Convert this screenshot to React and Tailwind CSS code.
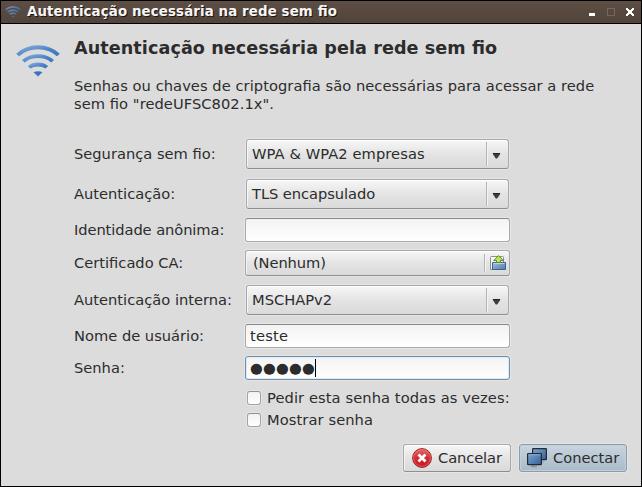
import React from "react";

function WifiIcon({ className }) {
  return (
    <svg viewBox="0 0 44 32" className={className} fill="none">
      <defs>
        <linearGradient id="wifi" x1="0" y1="0" x2="1" y2="1">
          <stop offset="0" stopColor="#8db2e0" />
          <stop offset="0.6" stopColor="#4a80c6" />
          <stop offset="1" stopColor="#3b74bd" />
        </linearGradient>
      </defs>
      <path d="M0.2 8.800Q9 .3 22 .3T43.800 8.800L41 11.200Q33 4.200 22 4.200T3 11.200Z" fill="url(#wifi)" />
      <path d="M6 15Q12.500 9.200 22 9.200T38 15L35.300 17.400Q30 13 22 13T8.700 17.400Z" fill="url(#wifi)" />
      <path d="M11.800 21Q16 17.600 22 17.600T32.200 21L29.500 23.500Q26.500 21.400 22 21.400T14.500 23.500Z" fill="url(#wifi)" />
      <path d="M17.500 27.300Q22 25 26.500 27.300L22 31.600Z" fill="#3b74bd" />
    </svg>
  );
}

function TitleBar() {
  return (
    <div className="flex h-[23px] shrink-0 items-center border-b border-black bg-linear-to-b from-[#5d4e45] to-[#53443b] pl-[4px] pr-[7px]">
      <WifiIcon className="h-[12px] w-[16px] opacity-80" />
      <span className="ml-[6px] grow whitespace-nowrap text-[13.33px] leading-[20px] font-bold tracking-[0.135px] text-[#f8f6f4] [text-shadow:1px_1px_0_#1c1512]">
        Autenticação necessária na rede sem fio
      </span>
      <svg viewBox="0 0 46 10" className="h-[10px] w-[46px]" shapeRendering="crispEdges">
        <rect x="1" y="6" width="6" height="3" fill="#fff" />
        <rect x="19.500" y="1.500" width="7" height="7" fill="none" stroke="#78665a" />
        <path d="M38 1h2v1h1v1h2v-1h1v-1h2v2h-1v1h-1v2h1v1h1v2h-2v-1h-1v-1h-2v1h-1v1h-2v-2h1v-1h1v-2h-1v-1h-1z" fill="#fff" />
      </svg>
    </div>
  );
}

function Row({ label, className, tracking = "", children }) {
  return (
    <div className={"flex items-center " + className}>
      <span className={"w-[171px] shrink-0 whitespace-nowrap " + tracking}>{label}</span>
      {children}
    </div>
  );
}

const raised =
  "flex items-center rounded-[3px] border border-[#a9a9a9] border-b-[#8e8e8e] bg-linear-to-b from-[#f7f7f7] via-[#e4e4e4] to-[#dadada] shadow-[0_0_0_1px_#e5e5e5,inset_0_1px_0_#fff,inset_1px_0_0_#f4f4f4]";

function Combo({ tracking = "", children }) {
  return (
    <div className={raised + " ml-px h-[30px] w-[263px] pl-[5px]"}>
      <span className={"grow whitespace-nowrap " + tracking}>{children}</span>
      <span className="h-6 w-[22px] border-l border-[#b4b4b4] pt-[11px] pl-[5px] shadow-[inset_1px_0_0_#f3f3f3]">
        <svg viewBox="0 0 9 6" className="h-[6px] w-[9px]">
          <path d="M0.500 .5h8L5.200 5.500H3.800Z" fill="#3c3c3c" />
          <path d="M1 .5h7" stroke="#222" />
        </svg>
      </span>
    </div>
  );
}

function FolderIcon() {
  return (
    <svg viewBox="0 0 16 16" className="h-4 w-4">
      <defs>
        <linearGradient id="folder" x1="0" y1="0" x2="1" y2="1">
          <stop offset="0" stopColor="#a5c1df" />
          <stop offset="1" stopColor="#5079ab" />
        </linearGradient>
      </defs>
      <path d="M.5 14.500V2.500Q.5 1.500 1.500 1.500H12.500Q13.500 1.500 13.500 2.500V14.500Z" fill="#f5f5f5" stroke="#8a8f89" />
      <path d="M2.500 7.500H15.500V14.500H2.500Z" fill="url(#folder)" stroke="#40648f" />
      <path d="M3.500 8.500h11" stroke="#bdd3e9" />
      <path d="M8.500 .6L13.300 5.500H10.500V7.500H6.500V5.500H3.700Z" fill="#c3e35c" stroke="#55902a" />
    </svg>
  );
}

function Entry({ focused, children }) {
  return (
    <div
      className={
        "flex h-6 w-[265px] items-center rounded-[3px] border bg-linear-to-b from-[#f3f3f3] to-white pl-[4px] " +
        (focused
          ? "border-[#6e8fac] shadow-[0_0_0_1px_#e5e5e5,inset_0_0_0_1px_#e1eaf1]"
          : "border-[#aaaaaa] border-t-[#888888] shadow-[0_0_0_1px_#e7e7e7]")
      }
    >
      {children}
    </div>
  );
}

function Check({ children }) {
  return (
    <label className="flex h-[22px] items-center whitespace-nowrap tracking-[0.09px]">
      <span className="mr-[6px] h-[14px] w-[14px] rounded-[3px] border border-[#a4a4a4] border-t-[#929292] bg-linear-to-b from-[#f2f2f2] to-white shadow-[0_0_0_1px_#e5e5e5]" />
      {children}
    </label>
  );
}

function CancelIcon() {
  return (
    <svg viewBox="0 0 20 20" className="h-5 w-5">
      <defs>
        <linearGradient id="stop" x1="0" y1="0" x2="0" y2="1">
          <stop offset="0" stopColor="#e66a6a" />
          <stop offset="0.5" stopColor="#d42c32" />
          <stop offset="1" stopColor="#c5161f" />
        </linearGradient>
      </defs>
      <circle cx="10" cy="10" r="9.400" fill="url(#stop)" stroke="#9d2024" />
      <circle cx="10" cy="10" r="8.400" fill="none" stroke="#ed8585" strokeOpacity=".6" />
      <path d="M6.500 6.500l7 7M13.500 6.500l-7 7" stroke="#fff" strokeWidth="2.800" />
    </svg>
  );
}

function NetworkIcon() {
  return (
    <svg viewBox="0 0 20 20" className="h-5 w-5">
      <defs>
        <linearGradient id="screen" x1="0" y1="0" x2="1" y2="1">
          <stop offset="0" stopColor="#7ea4cd" />
          <stop offset="1" stopColor="#31629c" />
        </linearGradient>
      </defs>
      <path d="M12 13h5v2h-6z" fill="#a9b0b5" />
      <rect x="5.600" y=".6" width="13.800" height="11" rx=".6" fill="url(#screen)" stroke="#24292d" strokeWidth="1.200" />
      <path d="M4 18.500h6M6 17v1" stroke="#8d9499" strokeWidth="1.500" />
      <rect x=".6" y="5.600" width="13.800" height="11" rx=".6" fill="url(#screen)" stroke="#24292d" strokeWidth="1.200" />
      <path d="M1.500 6.700h12" stroke="#9cbbdc" strokeWidth=".8" />
    </svg>
  );
}

export default function App() {
  return (
    <div className="flex h-[487px] w-[642px] flex-col overflow-hidden border border-black bg-[#dcdcdc] font-['DejaVu_Sans',sans-serif] text-[14.67px] leading-[18px] text-[#2c2c2c] [font-feature-settings:'liga']">
      <TitleBar />
      <div className="flex grow flex-col pl-[15px] pr-[14px]">
        <div className="flex">
          <WifiIcon className="mt-[21px] h-8 w-[44px] shrink-0" />
          <div className="ml-[14px] mt-[12px] whitespace-nowrap">
            <h1 className="text-[17.6px] leading-[24px] font-bold tracking-[0.07px]">
              Autenticação necessária pela rede sem fio
            </h1>
            <p className="mt-[17px] tracking-[0.055px]">
              Senhas ou chaves de criptografia são necessárias para acessar a rede
              <br />
              sem fio "redeUFSC802.1x".
            </p>
          </div>
        </div>
        <div className="ml-[58px] mt-[26px] flex flex-col">
          <Row label="Segurança sem fio:" className="h-[30px]">
            <Combo tracking="tracking-[0.08px]">WPA &amp; WPA2 empresas</Combo>
          </Row>
          <Row label="Autenticação:" className="mt-[10px] h-[30px]">
            <Combo tracking="tracking-[-0.06px]">TLS encapsulado</Combo>
          </Row>
          <Row label="Identidade anônima:" tracking="tracking-[-0.08px]" className="mt-[9px] h-6">
            <Entry />
          </Row>
          <Row label="Certificado CA:" className="mt-[8px] h-[26px]">
            <div className={raised + " h-[26px] w-[265px] pl-[7px] pr-[3px]"}>
              <span className="grow tracking-[-0.1px]">(Nenhum)</span>
              <span className="flex h-[18px] items-center border-l border-[#b4b4b4] pl-[5px] shadow-[inset_1px_0_0_#f3f3f3]">
                <FolderIcon />
              </span>
            </div>
          </Row>
          <Row label="Autenticação interna:" className="mt-[9px] h-[30px]">
            <Combo>MSCHAPv2</Combo>
          </Row>
          <Row label="Nome de usuário:" className="mt-[9px] h-6">
            <Entry>
              <span className="tracking-[0.2px]">teste</span>
            </Entry>
          </Row>
          <Row label="Senha:" className="mt-[8px] h-6">
            <Entry focused>
              <span className="tracking-[0.2px]">●●●●●</span>
              <span className="h-[18px] w-px bg-black" />
            </Entry>
          </Row>
        </div>
        <div className="mt-[7px] ml-[231px] flex flex-col">
          <Check>Pedir esta senha todas as vezes:</Check>
          <Check>Mostrar senha</Check>
        </div>
        <div className="mt-[13px] flex justify-end gap-2">
          <button className={raised + " h-7 w-[108px] gap-[6px] pl-[8px]"}>
            <CancelIcon />
            <span className="tracking-[-0.1px]">Cancelar</span>
          </button>
          <button className="flex h-7 w-[108px] items-center gap-[6px] rounded-[3px] border border-[#8b9baa] bg-linear-to-b from-[#c9d5df] to-[#a9bac8] pl-[7px] shadow-[0_0_0_1px_#e5e5e5,inset_0_0_0_1px_#c3cfd9]">
            <NetworkIcon />
            <span>Conectar</span>
          </button>
        </div>
      </div>
    </div>
  );
}
